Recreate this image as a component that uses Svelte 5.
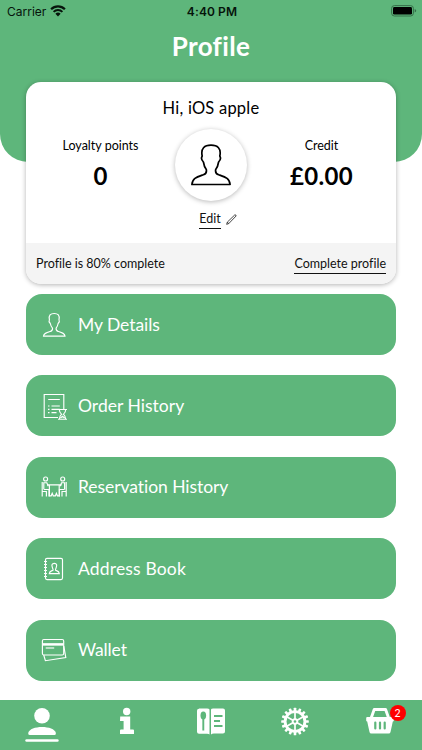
<script>
	let user = { name: "iOS apple", points: 0, credit: "£0.00", complete: 80 };

	let menu = [
		{ id: "details", label: "My Details", spacing: -0.05 },
		{ id: "orders", label: "Order History", spacing: 0.02 },
		{ id: "reservations", label: "Reservation History", spacing: -0.06 },
		{ id: "address", label: "Address Book", spacing: 0.16 },
		{ id: "wallet", label: "Wallet", spacing: -0.12 }
	];

	let tabs = ["profile", "info", "menu", "settings", "basket"];
	let currentTab = "profile";
	let basketCount = 2;

	const teeth = Array.from({ length: 16 }, (_, i) => i * 22.5);
	const spokes = [0, 60, 120, 180, 240, 300];
</script>

<div class="screen">
	<header>
		<div class="status">
			<div class="carrier">
				<span>Carrier</span>
				<svg width="16" height="12" viewBox="0 0 16 12">
					<path d="M1.1 4.3a9.8 9.8 0 0 1 13.8 0" fill="none" stroke="#06140b" stroke-width="2.2" />
					<path d="M3.6 6.9a6.2 6.2 0 0 1 8.8 0" fill="none" stroke="#06140b" stroke-width="2" />
					<path d="M5.4 8.8a3.7 3.7 0 0 1 5.2 0L8 11.4z" fill="#06140b" />
				</svg>
			</div>
			<span class="time">4:40 PM</span>
			<svg class="battery" width="26" height="12" viewBox="0 0 26 12">
				<rect x=".6" y=".6" width="21.8" height="10.4" rx="2.8" fill="none" stroke="#356f49" />
				<rect x="2" y="2" width="19" height="7.6" rx="1.4" fill="#000" />
				<path d="M23.7 4v3.6q1.5-.6 1.5-1.8T23.7 4" fill="#356f49" />
			</svg>
		</div>
		<h1>Profile</h1>
	</header>

	<section class="card">
		<h2>Hi, {user.name}</h2>
		<div class="summary">
			<div class="stat">
				<span class="label">Loyalty points</span>
				<span class="value">{user.points}</span>
			</div>
			<div class="photo">
				<div class="avatar">
					<svg width="40" height="43" viewBox="0 0 40 43">
						<path d="M12.400 18C10.300 16 10.300 13.500 11.200 12 9.500 4.500 13.500 1.200 20 1.200S30.500 4.500 28.800 12c.9 1.500.9 4-1.200 6-.6 4-1.900 6.200-2.900 7.500-.6 3 .4 4.400 3 5.200 6.500 2.300 11 3.500 11.400 9.800H.9C1.300 34.200 5.800 33 12.300 30.700c2.600-.8 3.600-2.200 3-5.200-1-1.300-2.300-3.500-2.900-7.500z" fill="none" stroke="#000" stroke-width="1.7" stroke-linejoin="round" />
					</svg>
				</div>
				<div class="edit">
					<span class="link">Edit</span>
					<svg width="11" height="11" viewBox="0 0 10 10">
						<path d="M.6 9.400 1.200 7.400 7.900.9q1.200-.6 1.300.9L2.500 8.700zM1.200 7.400l1.300 1.300" fill="none" stroke="#222" stroke-width=".75" />
					</svg>
				</div>
			</div>
			<div class="stat">
				<span class="label">Credit</span>
				<span class="value">{user.credit}</span>
			</div>
		</div>
		<footer>
			<span>Profile is {user.complete}% complete</span>
			<span class="link">Complete profile</span>
		</footer>
	</section>

	<nav class="menu">
		{#each menu as item (item.id)}
			<button>
				<svg width="28" height="28" viewBox="0 0 28 28" fill="none" stroke="#fff" stroke-width="1.15">
					{#if item.id === "details"}
						<path d="M10.300 12.500C8.800 11 8.800 9.800 9.400 8.800 8.400 4.300 10.500 2.500 14.200 2.500S20 4.300 19 8.800c.6 1 .6 2.200-.9 3.700-.4 2.400-1.300 3.900-2 4.700-.2 2 .4 2.600 2 3.200 4 1.200 6.700 1.900 6.900 4.700H3.500C3.700 22.300 6.500 21.600 10.500 20.400c1.600-.6 2.200-1.200 2-3.200-.8-.8-1.700-2.300-2.200-4.700z" />
					{:else if item.id === "orders"}
						<path d="M18 25.500H4.200V2.500h19.600v14.800M8.200 7.500h11.600M11.500 14h8.300M11.500 17.300h8.300M11.500 20.600h5M8 14h1.500M8 17.300h1.500M8 20.600h1.500" />
						<path d="M18 17.500h9M18 27.200h9M19.300 17.500c0 2.800 1 3.600 2.300 4.800-1.300 1.200-2.300 2-2.300 4.900M25.700 17.500c0 2.800-1 3.600-2.300 4.800 1.300 1.200 2.300 2 2.300 4.900M20.500 26l2-1.800 2 1.800" />
					{:else if item.id === "reservations"}
						<circle cx="5.600" cy="6" r="2" />
						<circle cx="22.700" cy="6" r="2" />
						<path d="M2.200 9v14.500M2.200 18.500h4.200v5M3.800 16.500V9.700h3l1.500 3.500M4 16.500h5v7M26.200 9v14.500M26.200 18.500H22v5M24.600 16.500V9.700h-3l-1.500 3.500M24.400 16.500h-5v7" />
						<path d="M9.400 11.800h9.800v3.700M9.400 11.800v11h1.800l1-2.500 1 2.500h2.200l1-2.500 1 2.500h1.800v-7.300M7 11.800h2.400M19.200 11.800h2.500" />
					{:else if item.id === "address"}
						<rect x="5.500" y="3.300" width="17" height="21.300" rx="1.500" />
						<path d="M4 6.500h3M4 9.500h3M4 12.500h3M4 15.500h3M4 18.500h3M4 21.500h3" />
						<path d="M12.400 12.500c-1-2.500-.5-4.200 1.900-4.200s2.900 1.700 1.900 4.200c-.2 1.400-1 1.600-.6 2.800 1.800.7 3.500.7 3.700 3.300h-10c.2-2.600 1.900-2.600 3.700-3.300.4-1.200-.4-1.400-.6-2.800z" />
					{:else}
						<rect x="2.400" y="3.500" width="21.300" height="15.500" rx="1.500" />
						<path d="M3.700 19 5.400 24.700l20.400-3.100-2-11.500" />
						<path d="M2.700 8.400h20.800" stroke-width="2.500" />
						<path d="M5.700 12h8.500" />
					{/if}
				</svg>
				<span style="letter-spacing: {item.spacing}px">{item.label}</span>
			</button>
		{/each}
	</nav>

	<nav class="tabs">
		{#each tabs as tab}
			<button class:current={tab === currentTab} aria-label={tab}>
				{#if tab === "profile"}
					<svg width="34" height="36" viewBox="0 0 34 36" fill="#fff">
						<circle cx="17" cy="8.800" r="7.800" />
						<path d="M3.200 26c1-4 7-6 13.800-6s12.900 2 13.900 6q.2 2-1.300 2H4.500q-1.500 0-1.300-2z" />
						<rect x=".3" y="32.200" width="33.400" height="2.600" rx="1.300" />
					</svg>
				{:else if tab === "info"}
					<svg width="16" height="28" viewBox="0 0 16 28" fill="#fff">
						<circle cx="7.700" cy="4.500" r="3.700" />
						<path d="M1.200 9.500h10v13H14q1 0 1 1v3.600H1v-3.600q0-1 1-1h2.600V14H1z" />
					</svg>
				{:else if tab === "menu"}
					<svg width="30" height="29" viewBox="0 0 30 29">
						<path d="M3 1.500h8q2 0 2.500 1V27.500q-.5-.8-2.500-.8H3q-2 0-2-2v-21q0-2 2-2zM17.200 1.500H27q2 0 2 2v21q0 2-2 2h-9q-2 0-3 1V2.500q.2-1 2.200-1z" fill="#fff" />
						<ellipse cx="7.300" cy="8.500" rx="2.800" ry="4" fill="#5eb67b" />
						<path d="M7.300 11.500v12M18 9h8.500M18 14h6M18 19h8.500" stroke="#5eb67b" stroke-width="1.900" />
					</svg>
				{:else if tab === "settings"}
					<svg width="28" height="29" viewBox="-14 -14.500 28 29">
						{#each teeth as angle}
							<rect x="-1.300" y="-13.800" width="2.600" height="4" rx=".6" fill="#fff" transform="rotate({angle})" />
						{/each}
						<circle r="9.900" fill="none" stroke="#fff" stroke-width="2.800" />
						{#each spokes as angle}
							<path d="M0-2v-7" stroke="#fff" stroke-width="1.700" transform="rotate({angle})" />
						{/each}
						<circle r="2.300" fill="none" stroke="#fff" stroke-width="1.900" />
					</svg>
				{:else}
					<svg width="28" height="28" viewBox="0 0 28 28">
						<path d="M5 11.500 8.200 2.500h11.400l3.200 9" fill="none" stroke="#fff" stroke-width="2.900" stroke-linejoin="round" />
						<path d="M1.200 10h25.600q1 0 1 1v2.500q0 1-1 1L24.500 25q-.3 1.500-1.800 1.500H5.300Q3.800 26.500 3.500 25L1.200 14.500q-1 0-1-1V11q0-1 1-1z" fill="#fff" />
						<path d="M9.300 15.500v6M14 15.500v6M18.700 15.500v6" stroke="#5eb67b" stroke-width="2.200" stroke-linecap="round" />
					</svg>
					<span class="badge">{basketCount}</span>
				{/if}
			</button>
		{/each}
	</nav>
</div>

<style>
	:global(body) {
		background: #fff;
	}

	.screen {
		width: 422px;
		height: 750px;
		display: flex;
		flex-direction: column;
		overflow: hidden;
		font-family: Lato, sans-serif;
		font-variant-ligatures: none;
		color: #111;
	}

	h1,
	h2 {
		margin: 0;
		text-align: center;
	}

	button {
		border: none;
		padding: 0;
		margin: 0;
		background: none;
		font-family: inherit;
	}

	header {
		height: 162px;
		flex: none;
		background: #5eb67b;
		border-radius: 0 0 28px 28px;
	}

	.status {
		display: grid;
		grid-template-columns: 1fr auto 1fr;
		align-items: center;
		height: 22px;
		padding: 0 5px 0 7px;
		font: 12px Inter, sans-serif;
		color: #06140b;
	}

	.carrier {
		display: flex;
		align-items: center;
		gap: 4px;
	}

	.time {
		font-weight: 600;
		letter-spacing: 0.1px;
	}

	.battery {
		justify-self: end;
	}

	h1 {
		margin-top: 8px;
		font-size: 26px;
		line-height: 32px;
		font-weight: 700;
		letter-spacing: 0.35px;
		color: #fff;
	}

	.card {
		flex: none;
		display: flex;
		flex-direction: column;
		width: 370px;
		height: 202px;
		margin: -80px auto 0;
		border-radius: 15px;
		overflow: hidden;
		background: #fff;
		box-shadow: 0 1px 5px rgba(0, 0, 0, 0.3);
	}

	h2 {
		padding-top: 16px;
		font-size: 16.5px;
		line-height: 20px;
		font-weight: 400;
		letter-spacing: 0.22px;
		color: #000;
	}

	.summary {
		display: grid;
		grid-template-columns: 149px 72px 149px;
		height: 125px;
	}

	.stat {
		display: flex;
		flex-direction: column;
		align-items: center;
		padding-top: 20px;
		color: #000;
	}

	.label {
		font-size: 12.5px;
		line-height: 16px;
	}

	.value {
		margin-top: 7px;
		font-size: 24px;
		line-height: 30px;
		font-weight: 700;
		letter-spacing: 0.3px;
	}

	.photo {
		padding-top: 11px;
	}

	.avatar {
		display: flex;
		align-items: center;
		justify-content: center;
		width: 72px;
		height: 72px;
		border-radius: 50%;
		box-shadow: 0 1px 5px rgba(0, 0, 0, 0.28);
	}

	.edit {
		display: flex;
		justify-content: center;
		align-items: center;
		gap: 5px;
		margin-top: 9px;
		padding-left: 13px;
		width: 60px;
		font-size: 12.5px;
	}

	.link {
		border-bottom: 1px solid #111;
		line-height: 18px;
	}

	footer {
		display: flex;
		flex: 1;
		align-items: center;
		justify-content: space-between;
		padding: 0 10px;
		background: #f4f4f4;
		font-size: 12.5px;
	}

	footer .link {
		margin-top: 1px;
	}

	.menu {
		display: flex;
		flex-direction: column;
		gap: 20.4px;
		padding: 10px 26px 0;
		flex: 1;
	}

	.menu button {
		display: flex;
		align-items: center;
		flex: none;
		gap: 10px;
		height: 61px;
		padding-left: 14px;
		padding-right: 12px;
		border-radius: 16px;
		background: #5eb67b;
		color: #fff;
		font-size: 17.5px;
		line-height: 24px;
	}

	.tabs {
		display: grid;
		grid-template-columns: repeat(5, 1fr);
		height: 50px;
		flex: none;
		background: #5eb67b;
	}

	.tabs button {
		position: relative;
		display: flex;
		justify-content: center;
		padding-top: 7px;
	}

	.badge {
		position: absolute;
		top: 5px;
		left: 52px;
		width: 16px;
		height: 16px;
		border-radius: 50%;
		background: #f00;
		color: #fff;
		font-size: 10.5px;
		line-height: 16px;
		text-align: center;
	}
</style>
